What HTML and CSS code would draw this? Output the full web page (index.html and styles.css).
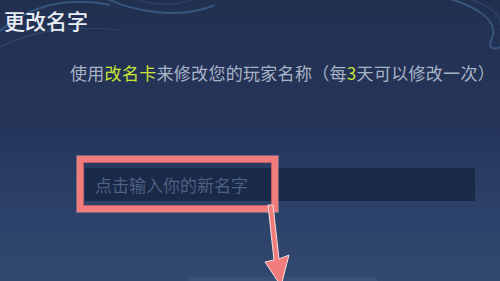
FILE: index.html
```html
<!DOCTYPE html>
<html lang="zh-CN">
<head>
<meta charset="utf-8">
<title>更改名字</title>
<link rel="stylesheet" href="styles.css">
</head>
<body>
<div class="screen">
  <svg class="deco" width="500" height="281" viewBox="0 0 500 281">
    <path d="M -10 40 C 20 10, 60 -5, 110 5" class="swirl"/>
    <path d="M -10 52 C 30 30, 70 25, 120 30" class="swirl faint"/>
    <path d="M 100 -5 C 130 12, 180 20, 215 5" class="swirl"/>
    <path d="M 120 -6 C 150 6, 175 8, 195 -2" class="swirl faint"/>
    <path d="M 440 -4 C 470 4, 500 18, 492 38 C 486 50, 495 50, 502 46" class="swirl"/>
    <path d="M 455 -6 C 480 2, 505 10, 500 30" class="swirl faint"/>
  </svg>
  <h1 class="title">更改名字</h1>
  <p class="desc">使用<span class="hl">改名卡</span>来修改您的玩家名称（每<span class="hl">3</span>天可以修改一次）</p>
  <div class="field-row">
    <div class="field">点击输入你的新名字</div>
  </div>
  <div class="bottom-bar"></div>
  <div class="highlight"></div>
  <svg class="arrow" width="40" height="90" viewBox="0 0 40 90">
    <path d="M 7 1 L 12 1 L 18 55 L 28 51 L 20 82 L 4 58 L 13 56 Z" class="arrow-shape"/>
  </svg>
</div>
</body>
</html>
```
FILE: styles.css
```css
html, body {
  margin: 0;
  padding: 0;
}
body {
  width: 500px;
  height: 281px;
  overflow: hidden;
  font-family: "Noto Sans CJK SC", "Noto Sans", sans-serif;
}
.screen {
  position: relative;
  width: 500px;
  height: 281px;
  overflow: hidden;
  background: linear-gradient(180deg, #223050 0%, #25355a 45%, #2c4169 75%, #31486f 100%);
  display: flex;
  flex-direction: column;
}
.deco {
  position: absolute;
  left: 0;
  top: 0;
}
.swirl {
  fill: none;
  stroke: #4b77a8;
  stroke-width: 2;
  opacity: 0.5;
}
.swirl.faint {
  stroke-width: 1.2;
  opacity: 0.3;
}
.title {
  position: relative;
  margin: 10px 0 0 4px;
  font-size: 21px;
  line-height: 21px;
  font-weight: 500;
  color: #e8edf5;
}
.desc {
  position: relative;
  margin: 33px 0 0 70px;
  font-size: 17px;
  line-height: 17px;
  color: #a8b3c7;
  white-space: nowrap;
  letter-spacing: 0.3px;
}
.hl {
  color: #c9e636;
}
.field-row {
  position: relative;
  margin-top: 87px;
  padding-left: 85px;
}
.field {
  width: 390px;
  height: 33px;
  box-sizing: border-box;
  padding-left: 10px;
  background: #1a2948;
  color: #4d6082;
  font-size: 17px;
  line-height: 33px;
}
.bottom-bar {
  margin: 76px 0 0 188px;
  width: 189px;
  height: 6px;
  background: #3a5076;
  border-radius: 2px 2px 0 0;
}
.highlight {
  position: absolute;
  left: 77px;
  top: 156px;
  width: 201px;
  height: 56px;
  box-sizing: border-box;
  border: 6px solid #f07c7c;
  box-shadow: inset 0 0 0 1px #c25d66, 0 0 0 1px rgba(255, 190, 190, 0.35);
}
.arrow {
  position: absolute;
  left: 261px;
  top: 204px;
}
.arrow-shape {
  fill: #f07c7c;
  stroke: #f8dede;
  stroke-width: 1;
  stroke-linejoin: miter;
}
```
